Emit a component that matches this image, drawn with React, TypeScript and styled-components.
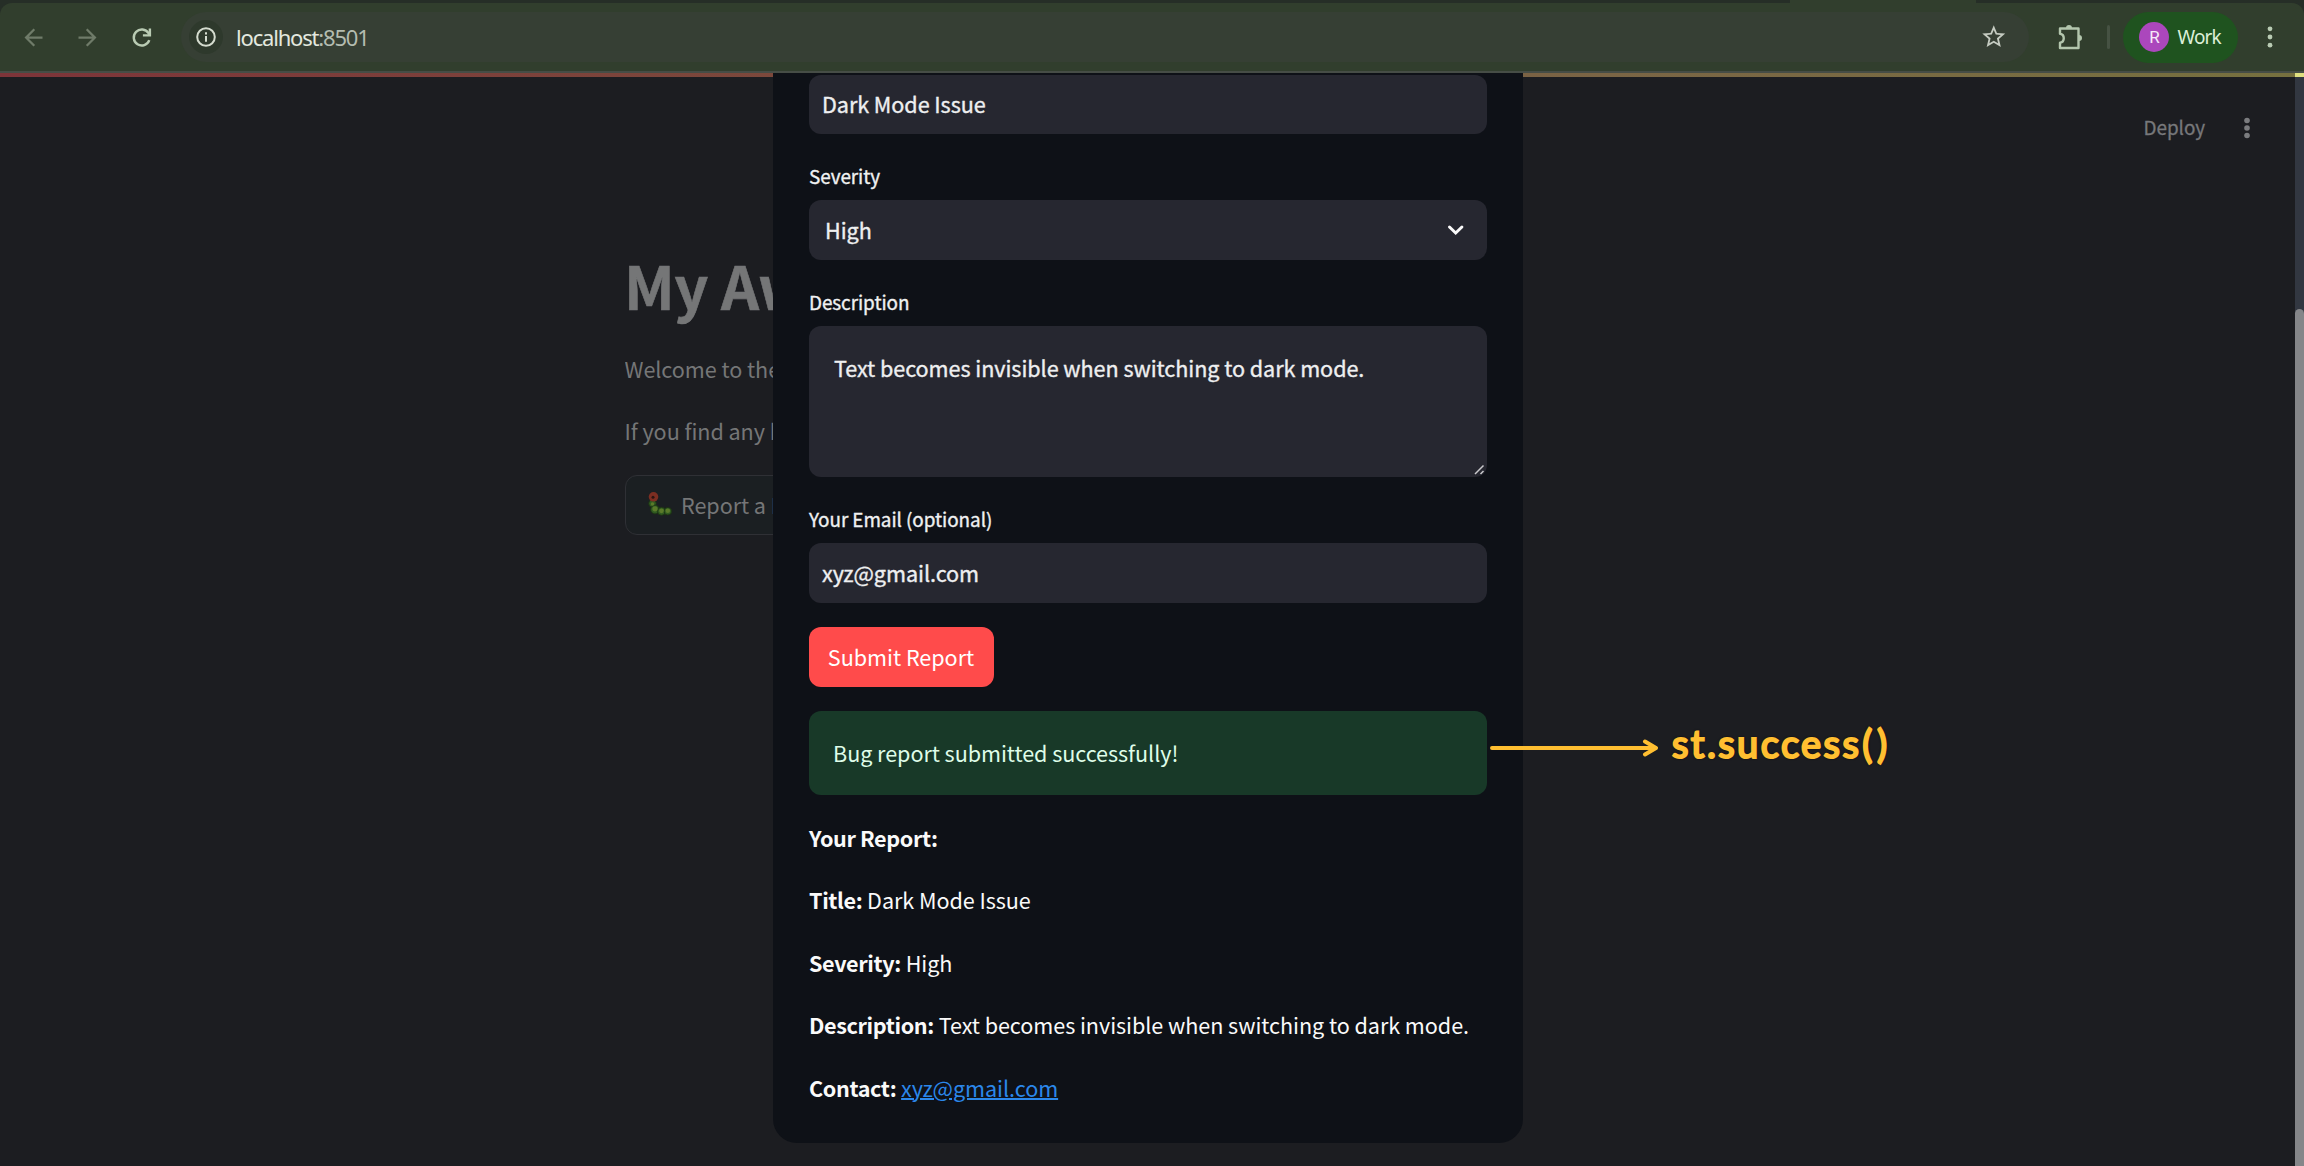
import React from "react";
import styled, { createGlobalStyle } from "styled-components";

const sans = `"Noto Sans CJK SC", "Noto Sans", sans-serif`;
const chrome = `"Noto Sans", "Open Sans", sans-serif`;

const Global = createGlobalStyle`
  html, body { margin: 0; background: #1c1d21; overflow: hidden; }
  * { box-sizing: border-box; }
`;

const Window = styled.div`
  width: 2304px;
  height: 1166px;
  display: flex;
  flex-direction: column;
  overflow: hidden;
  font-family: ${sans};
  letter-spacing: -0.06px;
`;

const Frame = styled.header`
  flex: none;
  height: 73px;
  background: #262e27;
  border-bottom: 2px solid #464d46;
`;

const TabStrip = styled.div`
  height: 3px;
  display: flex;
  padding-left: 1790px;
`;

const ActiveTab = styled.div`
  width: 186px;
  background: #313e2d;
`;

const Toolbar = styled.div`
  height: 68px;
  display: flex;
  align-items: center;
  background: #313e2d;
  border-radius: 12px 12px 0 0;
  padding: 0 20px 0 20px;
`;

const NavIcons = styled.div`
  display: flex;
  align-items: center;
  gap: 27px;
  width: 161px;
`;

const Omnibox = styled.div`
  flex: none;
  width: 1848px;
  height: 50px;
  border-radius: 25px;
  background: #363f34;
  display: flex;
  align-items: center;
  padding: 0 22px 0 7.5px;
`;

const SiteInfo = styled.div`
  width: 34px;
  height: 34px;
  border-radius: 50%;
  background: #2e392c;
  display: grid;
  place-items: center;
`;

const Address = styled.div`
  flex: 1;
  margin-left: 13.5px;
  font: 400 22px/30px ${chrome};
  letter-spacing: -1.18px;
  color: #e3e8df;
  span { color: #b4bcb0; }
`;

const Divider = styled.div`
  width: 3px;
  height: 24px;
  border-radius: 2px;
  background: #465243;
  margin: 0 13px 0 24px;
`;

const Profile = styled.div`
  width: 115px;
  height: 51px;
  border-radius: 26px;
  background: #1f531f;
  display: flex;
  align-items: center;
  gap: 8.5px;
  padding-left: 16px;
  font: 400 19px/30px ${chrome};
  letter-spacing: -0.9px;
  color: #dcefd8;
`;

const Avatar = styled.div`
  width: 30px;
  height: 30px;
  border-radius: 50%;
  background: #ab47bc;
  color: #f6e9f8;
  display: grid;
  place-items: center;
  font: 400 17px/30px Roboto, sans-serif;
`;

const Viewport = styled.main`
  position: relative;
  flex: 1;
  min-height: 0;
  display: flex;
`;

const Page = styled.div`
  flex: 1;
  min-width: 0;
  background: #1c1d21;
`;

const Rainbow = styled.div`
  height: 4px;
  background: linear-gradient(90deg, #7d3439 0%, #7b4c3c 40%, #7a6545 70%, #76703f 100%);
`;

const AppBar = styled.div`
  height: 100px;
  display: flex;
  justify-content: flex-end;
  align-items: center;
  padding-right: 44px;
  gap: 38px;
  font-size: 18.9px;
  color: #77787b;
  span {
    margin-top: -1px;
    -webkit-text-stroke: 0.3px #77787b;
  }
  svg { margin-top: 1px; }
`;

const Content = styled.div`
  margin-left: 624.5px;
  width: 148.5px;
  overflow: hidden;
  padding-top: 70px;
  display: flex;
  flex-direction: column;
  align-items: flex-start;
  gap: 24px;
  white-space: nowrap;
  color: #757677;
`;

const Title = styled.h1`
  margin: -2px 0 2px -0.5px;
  font-size: 59.4px;
  line-height: 79px;
  font-weight: 700;
  letter-spacing: -0.4px;
  -webkit-text-stroke: 0.6px #757677;
`;

const Text = styled.p`
  margin: 0;
  font-size: 21.6px;
  line-height: 38.4px;
  b { letter-spacing: -0.37px; }
`;

const PageButton = styled.div`
  flex: none;
  height: 60px;
  padding: 0 18px 0 22px;
  border: 1.5px solid #2f3035;
  border-radius: 12px;
  background: #1b1f22;
  display: flex;
  align-items: center;
  gap: 9.5px;
  font-size: 21.6px;
`;

const ScrollTrack = styled.div`
  width: 9px;
  background: #323741;
  border-top: 4px solid #dfdf80;
  padding-top: 232px;
  display: flex;
`;

const ScrollThumb = styled.div`
  flex: 1;
  background: #858689;
  border-radius: 5px 5px 0 0;
`;

const Dialog = styled.section`
  position: absolute;
  left: 773px;
  top: 0;
  width: 750px;
  height: 1070px;
  border-radius: 0 0 24px 24px;
  background: #0e1117;
  color: #fafafa;
  padding: 1.5px 36px 36px;
  display: flex;
  flex-direction: column;
  align-items: stretch;
`;

const Label = styled.label`
  height: 66px;
  padding-top: 25px;
  font-size: 18.9px;
  line-height: 34px;
  color: #f0f1f2;
  -webkit-text-stroke: 0.35px #f0f1f2;
`;

const Field = styled.div<{ $inset: number; $tall?: boolean }>`
  position: relative;
  height: ${(p) => (p.$tall ? 151.5 : 60)}px;
  padding: ${(p) => (p.$tall ? "23px" : "0")} 18px 0 ${(p) => p.$inset}px;
  border-radius: 12px;
  background: #262730;
  display: flex;
  align-items: ${(p) => (p.$tall ? "flex-start" : "center")};
  justify-content: space-between;
  font-size: 21.6px;
  line-height: 38px;
  color: #eeeff0;
  -webkit-text-stroke: 0.35px #eeeff0;
`;

const Grip = styled.svg`
  position: absolute;
  right: 2px;
  bottom: 2px;
`;

const Submit = styled.button`
  width: 185px;
  height: 60px;
  margin: 24px 0;
  border: 0;
  border-radius: 12px;
  background: #ff4b4b;
  color: #fff;
  font: 400 21.6px/38px ${sans};
  letter-spacing: -0.03px;
  padding: 0 1px 0 0;
`;

const Success = styled.div`
  height: 84px;
  border-radius: 12px;
  background: #183928;
  color: #dffde9;
  padding: 23px 24px;
  font-size: 21.6px;
  line-height: 38px;
`;

const Report = styled.div`
  margin-top: 24px;
  display: flex;
  flex-direction: column;
  gap: 24px;
  white-space: nowrap;
  a { color: #2b87ea; text-decoration: underline; text-decoration-thickness: 2px; }
`;

const Note = styled.div`
  position: absolute;
  left: 1490px;
  top: 641px;
  display: flex;
  align-items: center;
  gap: 13px;
  color: #ffbf31;
  font: 400 38px/60px Lato, sans-serif;
  letter-spacing: 2.4px;
  text-shadow: 0 0 3px #000, 0 0 2px #000;
  -webkit-text-stroke: 2.2px #ffbf31;
  svg { margin-top: 9px; }
  span { margin-top: -1px; }
  i { font-style: normal; letter-spacing: 4.5px; margin-left: 1px; }
`;

const Svg = ({ d, size, color }: { d: string; size: number; color: string }) => (
  <svg width={size} height={size} viewBox="0 0 24 24" fill={color}>
    <path d={d} />
  </svg>
);

const Dots = ({ r, step, color }: { r: number; step: number; color: string }) => (
  <svg width="8" height="26" viewBox="-4 -13 8 26" fill={color}>
    <circle cy={-step} r={r} />
    <circle r={r} />
    <circle cy={step} r={r} />
  </svg>
);

const Spaced = styled.span`
  display: flex;
  margin-left: 28px;
`;

const Caterpillar = () => (
  <svg width="24" height="25" viewBox="0 0 24 25">
    <g fill="#2f5a21" stroke="#1c3012" strokeWidth="0.8">
      <circle cx="4.500" cy="11.500" r="3.800" />
      <circle cx="7" cy="17.500" r="4.400" />
      <circle cx="13.500" cy="19.300" r="4" />
      <circle cx="19.800" cy="19.200" r="3.800" />
    </g>
    <g fill="#5a7a2a">
      <circle cx="4.500" cy="12" r="1.800" />
      <circle cx="7" cy="16.800" r="2.600" />
      <circle cx="13.500" cy="18.800" r="2.400" />
      <circle cx="19.800" cy="18.800" r="2.300" />
    </g>
    <circle cx="5.500" cy="4.800" r="4.800" fill="#7c2e22" />
    <circle cx="5" cy="5.300" r="1.500" fill="#2a1512" />
  </svg>
);

export default function App() {
  return (
    <Window>
      <Global />
      <Frame>
        <TabStrip>
          <ActiveTab />
        </TabStrip>
        <Toolbar>
          <NavIcons>
            <Svg size={27} color="#6f7b69" d="M20 11H7.83l5.59-5.59L12 4l-8 8 8 8 1.41-1.41L7.83 13H20v-2z" />
            <Svg size={27} color="#6f7b69" d="M12 4l-1.41 1.41L16.17 11H4v2h12.17l-5.58 5.59L12 20l8-8z" />
            <svg width="27" height="27" viewBox="0 0 27 27" fill="none" stroke="#b9cbb3" strokeWidth="2.4">
              <path d="M21.300 16.200A8 8 0 1 1 20.500 9.200L21.800 11" />
              <path d="M21.900 4.500V11.400H14.900" />
            </svg>
          </NavIcons>
          <Omnibox>
            <SiteInfo>
              <svg width="22" height="22" viewBox="0 0 22 22" fill="none" stroke="#d5dccf" strokeWidth="2">
                <circle cx="11" cy="11" r="8.800" />
                <path d="M11 10v5.800M11 6.200v2.200" />
              </svg>
            </SiteInfo>
            <Address>
              localhost<span>:8501</span>
            </Address>
            <Svg
              size={27.5}
              color="#c5cbc1"
              d="M22 9.240l-7.190-.62L12 2 9.190 8.630 2 9.240l5.460 4.730L5.820 21 12 17.270 18.180 21l-1.630-7.030L22 9.240zM12 15.400l-3.760 2.270 1-4.280-3.320-2.880 4.380-.38L12 6.100l1.710 4.040 4.380.38-3.320 2.880 1 4.280L12 15.400z"
            />
          </Omnibox>
          <Spaced>
            <svg width="26" height="28" viewBox="0 0 26 28" fill="none" stroke="#b3c6ad" strokeWidth="2.400" strokeLinejoin="round">
              <path d="M3 5.500H21.500V25H3V19.800C8 19 8 11.500 3 10.700Z" />
              <path d="M9 5a3 3 0 0 1 6 0ZM22 12a3 3 0 0 1 0 6Z" fill="#b3c6ad" stroke="none" />
            </svg>
          </Spaced>
          <Divider />
          <Profile>
            <Avatar>R</Avatar>Work
          </Profile>
          <Spaced>
            <Dots r={2.4} step={8.2} color="#b9cbb3" />
          </Spaced>
        </Toolbar>
      </Frame>
      <Viewport>
        <Page>
          <Rainbow />
          <AppBar>
            <span>Deploy</span>
            <Dots r={2.8} step={7.5} color="#7b7c7f" />
          </AppBar>
          <Content>
            <Title>My Aw</Title>
            <Text>Welcome to the</Text>
            <Text>If you find any b</Text>
            <PageButton>
              <Caterpillar />
              Report a B
            </PageButton>
          </Content>
        </Page>
        <ScrollTrack>
          <ScrollThumb />
        </ScrollTrack>
        <Dialog>
          <Field $inset={13}>Dark Mode Issue</Field>
          <Label>Severity</Label>
          <Field $inset={16}>
            High
            <svg width="26" height="24" viewBox="0 0 26 24" fill="none" stroke="#fafafa" strokeWidth="3" strokeLinecap="round">
              <path d="M6.500 9l6.200 6 6.200-6" />
            </svg>
          </Field>
          <Label>Description</Label>
          <Field $inset={25} $tall>
            Text becomes invisible when switching to dark mode.
            <Grip width="11" height="11" viewBox="0 0 11 11" stroke="#c9c9cc" strokeWidth="1.500">
              <path d="M1 10L9.500 1.500M6.500 10L9.500 7" />
            </Grip>
          </Field>
          <Label>Your Email (optional)</Label>
          <Field $inset={13}>xyz@gmail.com</Field>
          <Submit>Submit Report</Submit>
          <Success>Bug report submitted successfully!</Success>
          <Report>
            <Text><b>Your Report:</b></Text>
            <Text><b>Title:</b> Dark Mode Issue</Text>
            <Text><b>Severity:</b> High</Text>
            <Text><b>Description:</b> Text becomes invisible when switching to dark mode.</Text>
            <Text><b>Contact:</b> <a>xyz@gmail.com</a></Text>
          </Report>
        </Dialog>
        <Note>
          <svg width="169" height="20" viewBox="0 0 169 20" fill="none" stroke="#ffbf31" strokeWidth="4" strokeLinecap="round" strokeLinejoin="round">
            <path d="M2 10H165M155 3.500L166 10L155 16.500" />
          </svg>
          <span>st.success<i>()</i></span>
        </Note>
      </Viewport>
    </Window>
  );
}
